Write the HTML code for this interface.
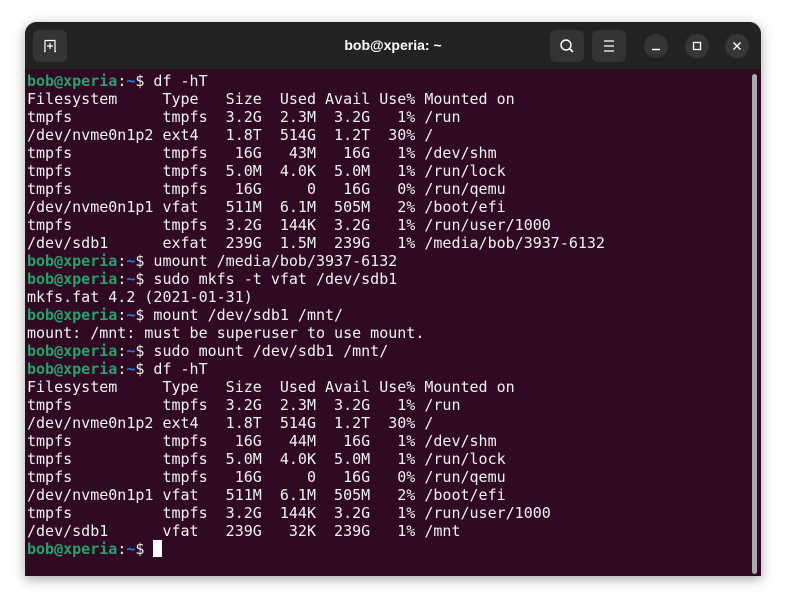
<!DOCTYPE html>
<html><head><meta charset="utf-8"><style>
body{margin:0;width:786px;height:605px;background:#fff;overflow:hidden;position:relative}
.win{position:absolute;left:25px;top:22px;width:736px;height:554px;border-radius:12px 12px 0 0;overflow:hidden;box-shadow:0 3px 12px rgba(0,0,0,.35);background:#300a24}
.tb{position:absolute;left:0;top:0;width:736px;height:47px;background:#222222}
.btn{position:absolute;top:8px;width:34px;height:32px;background:#343434;border-radius:6px}
.cb{position:absolute;top:12px;width:24px;height:24px;border-radius:50%;background:#363636}
.title{position:absolute;left:0;right:0;top:15px;text-align:center;color:#fff;font:bold 14px "Liberation Sans",sans-serif}
pre{position:absolute;left:2px;top:50px;margin:0;font:15px/18px "DejaVu Sans Mono","Liberation Mono",monospace;color:#f2f2f2;letter-spacing:0}
.g{color:#26a269;font-weight:bold}.b{color:#2a7bde;font-weight:bold}
.cur{display:inline-block;width:9px;height:17px;background:#fff;vertical-align:-3px}
.sb{position:absolute;left:727px;top:52px;width:5px;height:500px;background:#aaa;border-radius:3px}
</style></head><body>
<div class="win">
<div class="tb">
<div class="btn" style="left:8px"><svg width="34" height="32"><path d="M11 21.5H12V10.5H22V21.5H23M17 13V19M14 16H20" stroke="#fff" stroke-width="1.2" fill="none"/></svg></div>
<div class="title">bob@xperia: ~</div>
<div class="btn" style="left:525px"><svg width="34" height="32"><circle cx="16" cy="15" r="5" stroke="#fff" stroke-width="1.4" fill="none"/><path d="M19.5 18.5L23 22" stroke="#fff" stroke-width="1.6"/></svg></div>
<div class="btn" style="left:567px"><svg width="34" height="32"><path d="M12 11H22M12 16H22M12 21H22" stroke="#fff" stroke-width="1.3"/></svg></div>
<div class="cb" style="left:619px"><svg width="24" height="24"><path d="M8 15.5H16" stroke="#fff" stroke-width="1.4"/></svg></div>
<div class="cb" style="left:660px"><svg width="24" height="24"><rect x="8.5" y="8.5" width="7" height="7" stroke="#fff" stroke-width="1.3" fill="none"/></svg></div>
<div class="cb" style="left:700px"><svg width="24" height="24"><path d="M8.5 8.5L15.5 15.5M15.5 8.5L8.5 15.5" stroke="#fff" stroke-width="1.4"/></svg></div>
</div>
<pre><span class="g">bob@xperia</span>:<span class="b">~</span>$ df -hT
Filesystem     Type   Size  Used Avail Use% Mounted on
tmpfs          tmpfs  3.2G  2.3M  3.2G   1% /run
/dev/nvme0n1p2 ext4   1.8T  514G  1.2T  30% /
tmpfs          tmpfs   16G   43M   16G   1% /dev/shm
tmpfs          tmpfs  5.0M  4.0K  5.0M   1% /run/lock
tmpfs          tmpfs   16G     0   16G   0% /run/qemu
/dev/nvme0n1p1 vfat   511M  6.1M  505M   2% /boot/efi
tmpfs          tmpfs  3.2G  144K  3.2G   1% /run/user/1000
/dev/sdb1      exfat  239G  1.5M  239G   1% /media/bob/3937-6132
<span class="g">bob@xperia</span>:<span class="b">~</span>$ umount /media/bob/3937-6132
<span class="g">bob@xperia</span>:<span class="b">~</span>$ sudo mkfs -t vfat /dev/sdb1
mkfs.fat 4.2 (2021-01-31)
<span class="g">bob@xperia</span>:<span class="b">~</span>$ mount /dev/sdb1 /mnt/
mount: /mnt: must be superuser to use mount.
<span class="g">bob@xperia</span>:<span class="b">~</span>$ sudo mount /dev/sdb1 /mnt/
<span class="g">bob@xperia</span>:<span class="b">~</span>$ df -hT
Filesystem     Type   Size  Used Avail Use% Mounted on
tmpfs          tmpfs  3.2G  2.3M  3.2G   1% /run
/dev/nvme0n1p2 ext4   1.8T  514G  1.2T  30% /
tmpfs          tmpfs   16G   44M   16G   1% /dev/shm
tmpfs          tmpfs  5.0M  4.0K  5.0M   1% /run/lock
tmpfs          tmpfs   16G     0   16G   0% /run/qemu
/dev/nvme0n1p1 vfat   511M  6.1M  505M   2% /boot/efi
tmpfs          tmpfs  3.2G  144K  3.2G   1% /run/user/1000
/dev/sdb1      vfat   239G   32K  239G   1% /mnt
<span class="g">bob@xperia</span>:<span class="b">~</span>$ <span class="cur"></span></pre>
<div class="sb"></div>
</div>
</body></html>
